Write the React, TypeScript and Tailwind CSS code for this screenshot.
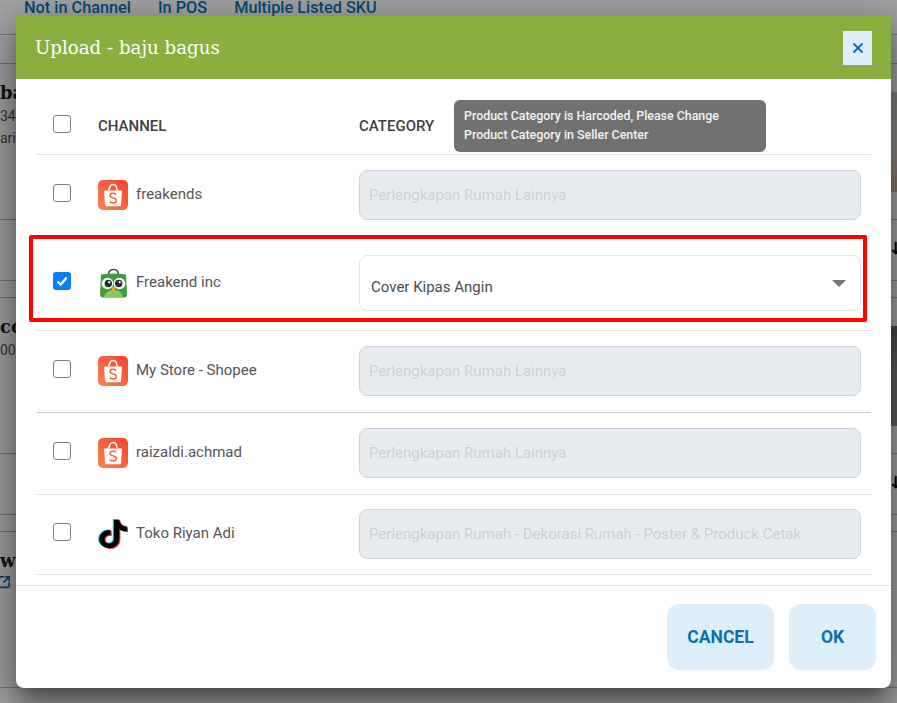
import React from 'react';
import { X, SquareArrowOutUpRight, ArrowDownUp } from 'lucide-react';

const ShopeeIcon = () => (
  <svg width="30" height="30" viewBox="0 0 30 30" className="shrink-0">
    <defs>
      <linearGradient id="shopee-bg" x1="0" y1="1" x2="1" y2="0">
        <stop offset="0" stopColor="#ff7f4d" />
        <stop offset="1" stopColor="#f2452b" />
      </linearGradient>
    </defs>
    <rect width="30" height="30" rx="5" fill="url(#shopee-bg)" />
    <path d="M6 10.5h18l-1 14.2a1.8 1.8 0 0 1-1.8 1.6H8.8A1.8 1.8 0 0 1 7 24.7z" fill="#fff" />
    <path d="M11 10.5C11 7 12.6 4.6 15 4.6s4 2.4 4 5.9" fill="none" stroke="#fff" strokeWidth="1.5" />
    <path
      d="M18.2 14.4c-.9-.8-2-1.2-3.2-1.2-1.8 0-3 .9-3 2.3 0 3.1 6.4 1.7 6.4 5 0 1.5-1.4 2.5-3.3 2.5-1.3 0-2.6-.5-3.6-1.4"
      fill="none"
      stroke="#f4572f"
      strokeWidth="1.3"
    />
  </svg>
);

const TokopediaIcon = () => (
  <svg width="30" height="30" viewBox="0 0 30 30" className="shrink-0">
    <path d="M10.500 7c0-3.400 2-5.600 5-5.600s5 2.200 5 5.600" fill="none" stroke="#4a4f4a" strokeWidth="1.5" />
    <path d="M3 6.500 Q15.500 4.500 28 6.500 L29 26 Q29 29.500 26 29.500 H5 Q2 29.500 2 26z" fill="#3e9b41" />
    <path d="M6 29.500 Q7 22 15.500 22 Q24 22 25 29.500z" fill="#86c95c" />
    <circle cx="9.500" cy="15.500" r="5.800" fill="#fff" />
    <circle cx="21.500" cy="15.500" r="5.800" fill="#fff" />
    <circle cx="10.300" cy="15.500" r="3.700" fill="#26302a" />
    <circle cx="20.700" cy="15.500" r="3.700" fill="#26302a" />
    <circle cx="11.300" cy="14.200" r="1.100" fill="#fff" />
    <circle cx="21.700" cy="14.200" r="1.100" fill="#fff" />
    <path d="M12.800 19h5.400L15.500 24.500z" fill="#f7a11b" />
  </svg>
);

const NOTE =
  'M448,209.91a210.06,210.06,0,0,1-122.77-39.25V349.38A162.55,162.55,0,1,1,185,188.31V278.2a74.62,74.62,0,1,0,52.23,71.18V0l88,0a121.18,121.18,0,0,0,1.86,22.17h0A122.18,122.18,0,0,0,381,102.39a121.43,121.43,0,0,0,67,20.14Z';

const TiktokIcon = () => (
  <svg width="30" height="30" viewBox="-18 -12 484 536" preserveAspectRatio="none" className="shrink-0">
    <path d={NOTE} fill="#25d4e0" transform="translate(-18 -12)" />
    <path d={NOTE} fill="#fb2c55" transform="translate(18 12)" />
    <path d={NOTE} fill="#000" />
  </svg>
);

const CheckBox = ({ checked = false, className = 'mb-[6px]' }: { checked?: boolean; className?: string }) =>
  checked ? (
    <div className={`ml-[17px] flex h-[18px] w-[18px] items-center justify-center rounded-[3px] bg-[#0b7ef5] ${className}`}>
      <svg width="12" height="12" viewBox="0 0 12 12">
        <path d="M1.500 6.500 4.600 9.500 10.500 2.800" fill="none" stroke="#fff" strokeWidth="2.400" />
      </svg>
    </div>
  ) : (
    <div className={`ml-[17px] h-[18px] w-[18px] rounded-[3px] border border-[#7f7f7f] bg-white ${className}`} />
  );

const DisabledInput = ({ value }: { value: string }) => (
  <div className="mb-[1px] flex h-[50px] w-[502px] items-center rounded-lg border border-[#cbd6e2] bg-[#e9ecef] pl-[9px] text-[15px] text-[#cdd0d3]">
    {value}
  </div>
);

const rows = [
  { name: 'freakends', icon: <ShopeeIcon />, category: 'Perlengkapan Rumah Lainnya', h: 'h-[82px]' },
  { name: 'Freakend inc', icon: <TokopediaIcon />, selected: true, h: 'h-[94px]' },
  { name: 'My Store - Shopee', icon: <ShopeeIcon />, category: 'Perlengkapan Rumah Lainnya', h: 'h-[82px]', strong: true },
  { name: 'raizaldi.achmad', icon: <ShopeeIcon />, category: 'Perlengkapan Rumah Lainnya', h: 'h-[82px]' },
  { name: 'Toko Riyan Adi', icon: <TiktokIcon />, category: 'Perlengkapan Rumah - Dekorasi Rumah - Poster & Produck Cetak', h: 'h-[80px]' },
];

const ProductRow = ({ title, code, sub, photo, link }: { title: string; code?: string; sub?: string; photo: string; link?: boolean }) => (
  <div>
    <div className="flex h-[156px] justify-between border-b border-[#bbb] pt-[18px]">
      <div className="w-[200px]">
        <div className="font-['DejaVu_Serif',serif] text-lg leading-[22px] font-bold text-[#222]">{title}</div>
        {code && <div className="mt-[1px] text-sm leading-[22px] text-[#555]">{code}</div>}
        {sub && <div className="text-sm leading-[22px] text-[#555]">{sub}</div>}
        {link && <SquareArrowOutUpRight className="mt-[3px] -ml-[3px] h-[14px] w-[14px] text-[#0a6ea8]" strokeWidth={3} />}
      </div>
      <div className={`mt-[10px] mr-[-93px] h-[100px] w-[100px] ${photo}`} />
    </div>
    <div className="flex h-[61px] items-center justify-end border-b border-[#bbb]">
      <ArrowDownUp className="mr-[-10px] mb-[4px] h-4 w-4 text-black" strokeWidth={3} />
    </div>
    <div className="h-[17px] border-b border-[#bbb]" />
  </div>
);

export default function App() {
  return (
    <div className="relative h-[703px] w-[897px] overflow-hidden bg-white font-['Roboto',sans-serif]">
      {/* page behind the dialog */}
      <div className="flex h-[35px] gap-[27px] border-b border-[#bbb] pl-6 text-[16.300px] leading-[16px] font-medium text-[#0a76b8]">
        <span>Not in Channel</span>
        <span>In POS</span>
        <span>Multiple Listed SKU</span>
      </div>
      <div className="h-[29px] border-b border-[#bbb]" />
      <ProductRow title="baju bagus" code="3456" sub="ariasi" photo="bg-gradient-to-b from-[#c8c8bc] via-[#dadacb] to-[#d8b9a5]" />
      <ProductRow title="cover" code="0001" photo="bg-gradient-to-b from-[#6f6f6f] via-[#949494] to-[#949494]" />
      <ProductRow title="wow" photo="bg-white" link />
      <div className="relative h-[20px]">
        <div className="absolute top-0 left-[300px] h-full w-[17px] border-x border-[#bbb]" />
        <div className="absolute top-0 left-[839px] h-full w-[17px] border-x border-[#bbb]" />
        <div className="absolute top-[12px] left-[336px] h-3 w-[86px] rounded bg-[#e5e5e5]" />
        <div className="absolute top-[12px] left-[432px] h-3 w-[72px] rounded bg-[#e5e5e5]" />
      </div>

      {/* backdrop */}
      <div className="absolute inset-0 bg-black/35" />

      {/* dialog */}
      <div className="absolute top-4 left-4 flex h-[672px] w-[875px] flex-col rounded-b-lg bg-white shadow-[0_11px_15px_-7px_rgba(0,0,0,0.35),0_24px_38px_3px_rgba(0,0,0,0.25),0_9px_46px_8px_rgba(0,0,0,0.25)]">
        <div className="flex h-[63px] shrink-0 items-center justify-between bg-[#8aaf40] pr-[19px] pl-[19px]">
          <div className="font-['DejaVu_Serif',serif] text-[18.200px] text-white">Upload - baju bagus</div>
          <button className="flex h-[34px] w-[29px] items-center justify-center bg-[#dfeefb] text-[#0a72b0]">
            <X className="h-4 w-4" strokeWidth={3} />
          </button>
        </div>

        <div className="relative flex-1 px-5">
          <div className="grid h-[76px] grid-cols-[62px_261px_1fr] items-end border-b border-[#dee2e6] pb-[19px] text-[15px] font-medium text-[#3f3f3f]">
            <CheckBox className="mb-[2px]" />
            <div className="leading-[18px]">CHANNEL</div>
            <div className="leading-[18px]">CATEGORY</div>
          </div>
          <div className="absolute top-[21px] left-[438px] h-[52px] w-[312px] rounded-md bg-[#717171] px-[10px] py-[6px] text-[12.400px] leading-[19px] font-medium text-[#f2f2f2]">
            <div>Product Category is Harcoded, Please Change</div>
            <div>Product Category in Seller Center</div>
          </div>

          {rows.map((row) => (
            <div
              key={row.name}
              className={`grid ${row.h} grid-cols-[62px_261px_1fr] items-center border-b ${row.strong ? 'border-[#cfcfcf]' : 'border-[#e3e3e3]'}`}
            >
              <CheckBox checked={row.selected} />
              <div className="mb-[1px] flex items-center gap-2 text-[15px] text-[#555]">
                {row.icon}
                <span className="mb-[1px]">{row.name}</span>
              </div>
              {row.selected ? (
                <div className="mb-[1px] flex h-[56px] w-[502px] items-center justify-between rounded-lg border border-[#e5e5e5] bg-white pr-[14px] pl-[11px] text-[15px] text-[#4a4a4a]">
                  <span className="mt-[9px]">Cover Kipas Angin</span>
                  <div className="h-0 w-0 border-x-[7px] border-t-[7px] border-x-transparent border-t-[#777]" />
                </div>
              ) : (
                <DisabledInput value={row.category ?? ''} />
              )}
            </div>
          ))}

          {/* red highlight box */}
          <div className="absolute top-[156px] left-[13px] h-[87px] w-[838px] rounded-[2px] border-4 border-[#ff0000]" />
        </div>

        <div className="flex h-[103px] shrink-0 items-start justify-end gap-[15px] border-t border-[#e3e3e3] pt-[18px] pr-[15px]">
          <button className="h-[66px] w-[107px] rounded-xl bg-[#dfeefb] text-[17.500px] font-bold text-[#0a72b0]">CANCEL</button>
          <button className="h-[66px] w-[87px] rounded-xl bg-[#dfeefb] text-[17.500px] font-bold text-[#0a72b0]">OK</button>
        </div>
      </div>
    </div>
  );
}
